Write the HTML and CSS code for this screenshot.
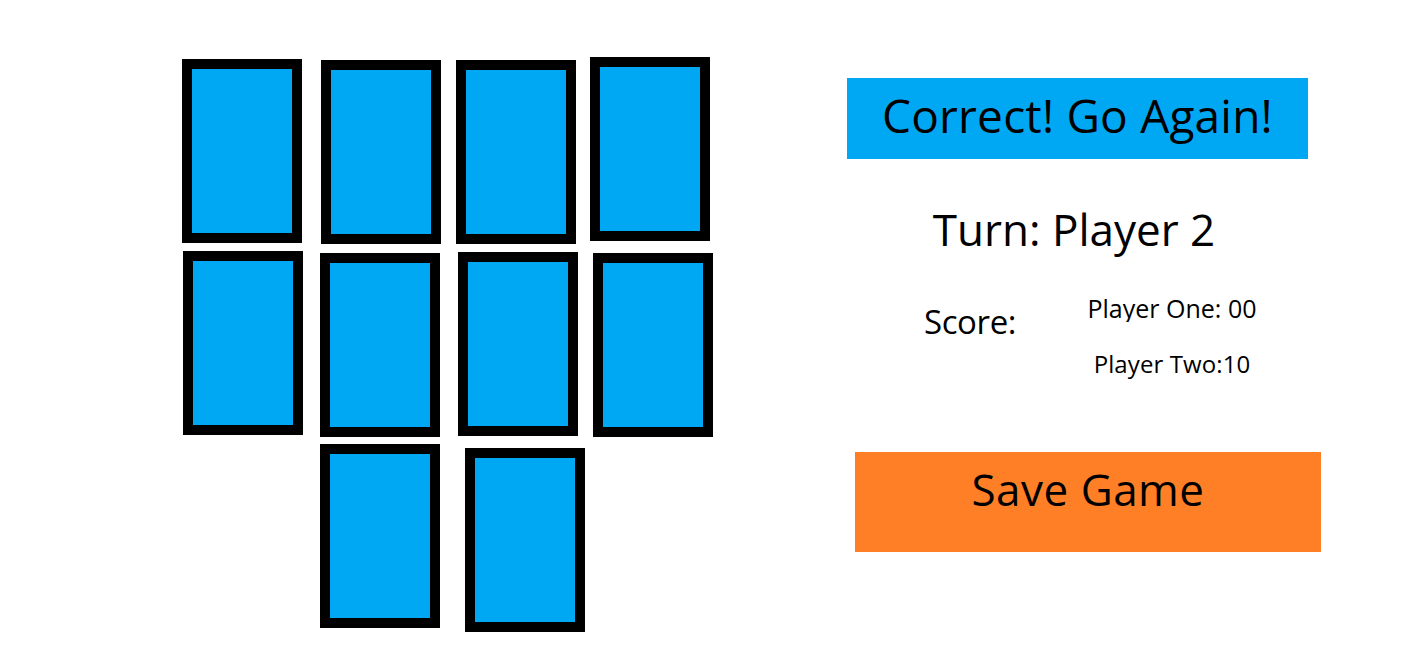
FILE: index.html
```html
<!DOCTYPE html>
<html lang="en">
<head>
<meta charset="utf-8">
<title>Memory Game</title>
<link rel="stylesheet" href="styles.css">
</head>
<body>
<div class="page">
  <div class="board">
    <div class="grid">
      <div class="card c1"></div>
      <div class="card c2"></div>
      <div class="card c3"></div>
      <div class="card c4"></div>
      <div class="card c5"></div>
      <div class="card c6"></div>
      <div class="card c7"></div>
      <div class="card c8"></div>
      <div class="card c9"></div>
      <div class="card c10"></div>
    </div>
  </div>
  <div class="panel">
    <div class="status">Correct! Go Again!</div>
    <div class="turn">Turn: Player 2</div>
    <div class="score">
      <div class="score-label">Score:</div>
      <div class="players">
        <div class="player one">Player One: 00</div>
        <div class="player two">Player Two:10</div>
      </div>
    </div>
    <div class="save">Save Game</div>
  </div>
</div>
</body>
</html>
```
FILE: styles.css
```css
html, body {
  margin: 0;
  padding: 0;
  background: #ffffff;
}
body {
  font-family: "Open Sans", "Noto Sans", sans-serif;
  color: #000000;
  overflow: hidden;
}
.page {
  display: flex;
  align-items: flex-start;
  width: 1416px;
  height: 665px;
}
.board {
  padding-left: 182px;
  padding-top: 57px;
}
.grid {
  display: grid;
  grid-template-columns: 139px 136px 135px 120px;
  grid-template-rows: 193px 193px 190px;
  align-items: start;
  justify-items: start;
}
.card {
  box-sizing: border-box;
  width: 120px;
  height: 184px;
  border: 10px solid #000000;
  background: #00a8f3;
}
.c1 { margin-top: 2px; }
.c2 { margin-top: 3px; }
.c3 { margin-top: 3px; margin-left: -1px; }
.c4 { margin-left: -2px; }
.c5 { margin-top: 1px; margin-left: 1px; }
.c6 { margin-top: 3px; margin-left: -1px; }
.c7 { margin-top: 2px; margin-left: 1px; }
.c8 { margin-top: 3px; margin-left: 1px; }
.c9 { grid-column: 2; margin-top: 1px; margin-left: -1px; }
.c10 { grid-column: 3; margin-top: 5px; margin-left: 8px; }

.panel {
  margin-left: 135px;
  padding-top: 78px;
  display: flex;
  flex-direction: column;
  align-items: flex-start;
}
.status {
  box-sizing: border-box;
  width: 461px;
  height: 81px;
  padding-top: 6px;
  background: #00a8f3;
  font-size: 46px;
  letter-spacing: 0.2px;
  text-align: center;
  white-space: nowrap;
}
.turn {
  box-sizing: border-box;
  width: 461px;
  padding-right: 7px;
  margin-top: 40px;
  font-size: 44px;
  text-align: center;
  white-space: nowrap;
}
.score {
  display: flex;
  align-items: flex-start;
  margin-top: 32px;
  padding-left: 77px;
}
.score-label {
  width: 148px;
  margin-top: 8px;
  font-size: 33px;
  letter-spacing: -0.4px;
  white-space: nowrap;
}
.players {
  width: 200px;
  display: flex;
  flex-direction: column;
  align-items: center;
}
.player {
  white-space: nowrap;
}
.player.one {
  font-size: 25px;
  height: 31px;
  overflow: hidden;
  margin-bottom: 25px;
}
.player.two {
  font-size: 24px;
  letter-spacing: 0.1px;
}
.save {
  box-sizing: border-box;
  width: 466px;
  height: 100px;
  margin-top: 72px;
  margin-left: 8px;
  padding-top: 7px;
  background: #ff7f27;
  font-size: 44px;
  letter-spacing: 0.5px;
  text-align: center;
  white-space: nowrap;
}
```
